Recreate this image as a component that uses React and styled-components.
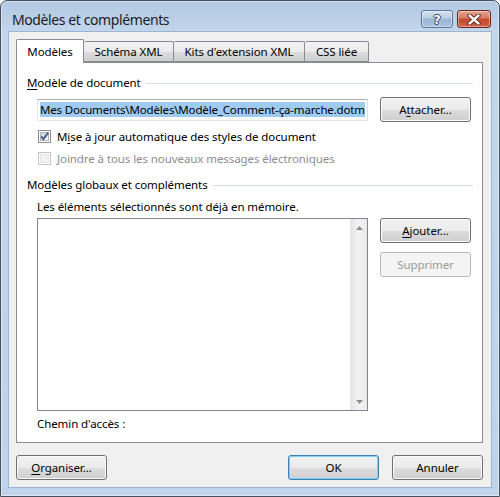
import React from 'react';
import styled, { createGlobalStyle } from 'styled-components';

const GlobalStyle = createGlobalStyle`
  html, body {
    margin: 0;
    padding: 0;
    background: #fff;
  }
  body {
    font-family: "Noto Sans", "Open Sans", sans-serif;
    font-size: 11.5px;
    letter-spacing: -0.08px;
    color: #000;
  }
  * { box-sizing: border-box; }
`;

const Window = styled.div`
  width: 500px;
  height: 497px;
  display: flex;
  flex-direction: column;
  border: 1px solid #47505e;
  border-radius: 7px 7px 0 0;
  background: linear-gradient(180deg, #b2c9e3 0px, #c2d6ec 30px, #bfd4eb 100%);
  box-shadow: inset 0 0 0 1px rgba(255, 255, 255, 0.45);
`;

const TitleBar = styled.div`
  height: 30px;
  display: flex;
  align-items: flex-start;
  padding: 9px 8px 0 11px;
`;

const Title = styled.div`
  flex: 1;
  font-size: 14px;
  letter-spacing: -0.4px;
  line-height: 20px;
  color: #1b1b1b;
`;

const CaptionButtons = styled.div`
  display: flex;
  gap: 4px;
`;

const CaptionButton = styled.div`
  width: ${p => p.w}px;
  height: 18px;
  border-radius: 3px;
  display: flex;
  align-items: center;
  justify-content: center;
  border: 1px solid ${p => (p.close ? '#6e2417' : '#5d7596')};
  background: ${p => (p.close
    ? 'linear-gradient(180deg, #e6a595 0%, #d67a63 45%, #c4462d 50%, #cf6249 100%)'
    : 'linear-gradient(180deg, #d6e3f2 0%, #b9cde4 45%, #9bb5d4 50%, #abc3df 100%)')};
  box-shadow: inset 0 0 0 1px rgba(255, 255, 255, 0.4);
`;

const HelpGlyph = styled.span`
  color: #fff;
  font-family: "DejaVu Sans", sans-serif;
  font-weight: bold;
  font-size: 13px;
  line-height: 1;
  text-shadow: 1px 0 0 #34475f, -1px 0 0 #34475f, 0 1px 0 #34475f, 0 -1px 0 #34475f;
`;

const Client = styled.div`
  flex: 1;
  margin: 0 7px 8px;
  border: 1px solid #9fb4ce;
  background: #f0f0f0;
  display: flex;
  flex-direction: column;
  padding: 7px 8px 7px 7px;
`;

const TabStrip = styled.div`
  display: flex;
  align-items: flex-end;
  height: 23px;
  position: relative;
  z-index: 1;
`;

const Tab = styled.div`
  width: ${p => p.w}px;
  height: ${p => (p.active ? 24 : 21)}px;
  margin-bottom: ${p => (p.active ? -1 : 0)}px;
  border: 1px solid #898c95;
  border-bottom: ${p => (p.active ? 'none' : '1px solid #898c95')};
  border-left: ${p => (p.first || p.active ? '1px solid #898c95' : 'none')};
  border-radius: 2px 2px 0 0;
  background: ${p => (p.active ? '#fff' : 'linear-gradient(180deg, #f3f3f3 0%, #ebebeb 50%, #dddddd 51%, #cfcfcf 100%)')};
  display: flex;
  align-items: center;
  justify-content: center;
  padding-bottom: ${p => (p.active ? 1 : 0)}px;
`;

const Panel = styled.div`
  height: 381px;
  border: 1px solid #898c95;
  background: #fff;
  padding: 12px 9px 0 10px;
`;

const GroupHeader = styled.div`
  display: flex;
  align-items: center;
  gap: 5px;
  height: 16px;
  margin-top: ${p => p.mt || 0}px;
  line-height: 16px;
  &::after {
    content: '';
    flex: 1;
    height: 1px;
    background: #d5dfe5;
  }
`;

const Key = styled.span`
  text-decoration: underline;
  text-underline-offset: 2px;
`;

const GroupBody = styled.div`
  padding-left: 10px;
`;

const Row = styled.div`
  display: flex;
  align-items: ${p => p.align || 'center'};
  gap: 12px;
  margin-top: ${p => p.mt || 0}px;
`;

const TextBox = styled.div`
  width: 331px;
  height: 22px;
  border: 1px solid;
  border-color: #abadb3 #dbdfe6 #e3e9ef #e2e3ea;
  padding: 0 1px 0 2px;
  display: flex;
  align-items: center;
  white-space: nowrap;
  overflow: hidden;
  letter-spacing: -0.16px;
`;

const Selected = styled.span`
  background: #9fcbf2;
  line-height: 15px;
`;

const Button = styled.div`
  width: 91px;
  height: 25px;
  border-radius: 3px;
  display: flex;
  align-items: center;
  justify-content: center;
  border: 1px solid ${p => (p.disabled ? '#b5b8bb' : p.primary ? '#3c7fb1' : '#707070')};
  color: ${p => (p.disabled ? '#9a9a9a' : '#000')};
  background: ${p => (p.disabled
    ? '#f4f4f4'
    : 'linear-gradient(180deg, #f2f2f2 0%, #ebebeb 50%, #dddddd 51%, #cfcfcf 100%)')};
  box-shadow: ${p => (p.disabled ? 'none' : p.primary ? 'inset 0 0 0 1px #7fd3f6' : 'inset 0 0 0 1px #fbfbfb')};
  margin-left: ${p => (p.push ? 'auto' : '0')};
`;

const CheckRow = styled.div`
  display: flex;
  align-items: center;
  gap: 6px;
  height: 16px;
  margin-top: 6px;
  padding-left: 1px;
  color: ${p => (p.disabled ? '#8d8d8d' : '#000')};
`;

const Box = styled.div`
  width: 13px;
  height: 13px;
  border: 1px solid ${p => (p.disabled ? '#c4c4c4' : '#8e8f8f')};
  background: #fff;
  padding: 1px;
  position: relative;
`;

const BoxInner = styled.div`
  width: 100%;
  height: 100%;
  background: ${p => (p.disabled ? '#f2f2f2' : 'linear-gradient(135deg, #cdd1d7 0%, #eef0f2 70%, #f8f8f8 100%)')};
  border: 1px solid ${p => (p.disabled ? '#e6e6e6' : '#b5b8bd')};
`;

const CheckMark = styled.svg`
  position: absolute;
  left: -1px;
  top: -1px;
`;

const Text = styled.div`
  height: 16px;
  line-height: 16px;
  margin-top: ${p => p.mt || 0}px;
`;

const ListBox = styled.div`
  width: 331px;
  height: 193px;
  border: 1px solid #828790;
  background: #fff;
  display: flex;
  justify-content: flex-end;
`;

const ScrollBar = styled.div`
  width: 17px;
  height: 100%;
  display: flex;
  flex-direction: column;
  justify-content: space-between;
  background: linear-gradient(90deg, #e6e6e6 0%, #f1f1f1 40%, #f1f1f1 70%, #e9e9e9 100%);
  border-left: 1px solid #e3e3e3;
`;

const ArrowCell = styled.div`
  height: 17px;
  display: flex;
  align-items: center;
  justify-content: center;
`;

const ButtonColumn = styled.div`
  display: flex;
  flex-direction: column;
  gap: 9px;
`;

const Footer = styled.div`
  display: flex;
  gap: 13px;
  margin-top: 12px;
`;

function Checkbox({ checked, disabled }) {
  return (
    <Box disabled={disabled}>
      <BoxInner disabled={disabled} />
      {checked && (
        <CheckMark width="13" height="13" viewBox="0 0 13 13">
          <path d="M3.2 6.4 L5.4 9.2 L10.2 2.6" fill="none" stroke="#4b5f8c" strokeWidth="2" />
        </CheckMark>
      )}
    </Box>
  );
}

function Arrow({ down }) {
  return (
    <ArrowCell>
      <svg width="7" height="4" viewBox="0 0 7 4">
        <path d={down ? 'M0 0 L7 0 L3.5 4 Z' : 'M0 4 L7 4 L3.5 0 Z'} fill="#8e8e8e" />
      </svg>
    </ArrowCell>
  );
}

export default function App() {
  return (
    <>
      <GlobalStyle />
      <Window>
        <TitleBar>
          <Title>Modèles et compléments</Title>
          <CaptionButtons>
            <CaptionButton w={32}>
              <HelpGlyph>?</HelpGlyph>
            </CaptionButton>
            <CaptionButton w={34} close>
              <svg width="14" height="11" viewBox="0 0 14 11">
                <path d="M2.5 1.5 L11.5 9.5 M11.5 1.5 L2.5 9.5" stroke="#4a1a12" strokeWidth="4.2" strokeLinecap="round" />
                <path d="M2.5 1.5 L11.5 9.5 M11.5 1.5 L2.5 9.5" stroke="#fff" strokeWidth="2.4" strokeLinecap="round" />
              </svg>
            </CaptionButton>
          </CaptionButtons>
        </TitleBar>

        <Client>
          <TabStrip>
            <Tab w={68} active first>Modèles</Tab>
            <Tab w={90}>Schéma XML</Tab>
            <Tab w={131}>Kits d'extension XML</Tab>
            <Tab w={64}>CSS liée</Tab>
          </TabStrip>

          <Panel>
            <GroupHeader>
              <span><Key>M</Key>odèle de document</span>
            </GroupHeader>
            <GroupBody>
              <Row mt={6}>
                <TextBox>
                  <Selected>Mes Documents\Modèles\Modèle_Comment-ça-marche.dotm</Selected>
                </TextBox>
                <Button>A<Key>t</Key>tacher...</Button>
              </Row>
              <CheckRow>
                <Checkbox checked />
                <span>M<Key>i</Key>se à jour automatique des styles de document</span>
              </CheckRow>
              <CheckRow disabled>
                <Checkbox disabled />
                <span>Joindre à tous les nouveaux messages électroniques</span>
              </CheckRow>
            </GroupBody>

            <GroupHeader mt={11}>
              <span>Mo<Key>d</Key>èles globaux et compléments</span>
            </GroupHeader>
            <GroupBody>
              <Text mt={6}>Les éléments sélectionnés sont déjà en mémoire.</Text>
              <Row mt={3} align="flex-start">
                <ListBox>
                  <ScrollBar>
                    <Arrow />
                    <Arrow down />
                  </ScrollBar>
                </ListBox>
                <ButtonColumn>
                  <Button><Key>A</Key>jouter...</Button>
                  <Button disabled>Supprimer</Button>
                </ButtonColumn>
              </Row>
              <Text mt={5}>Chemin d'accès :</Text>
            </GroupBody>
          </Panel>

          <Footer>
            <Button><Key>O</Key>rganiser...</Button>
            <Button primary push>OK</Button>
            <Button>Annuler</Button>
          </Footer>
        </Client>
      </Window>
    </>
  );
}
